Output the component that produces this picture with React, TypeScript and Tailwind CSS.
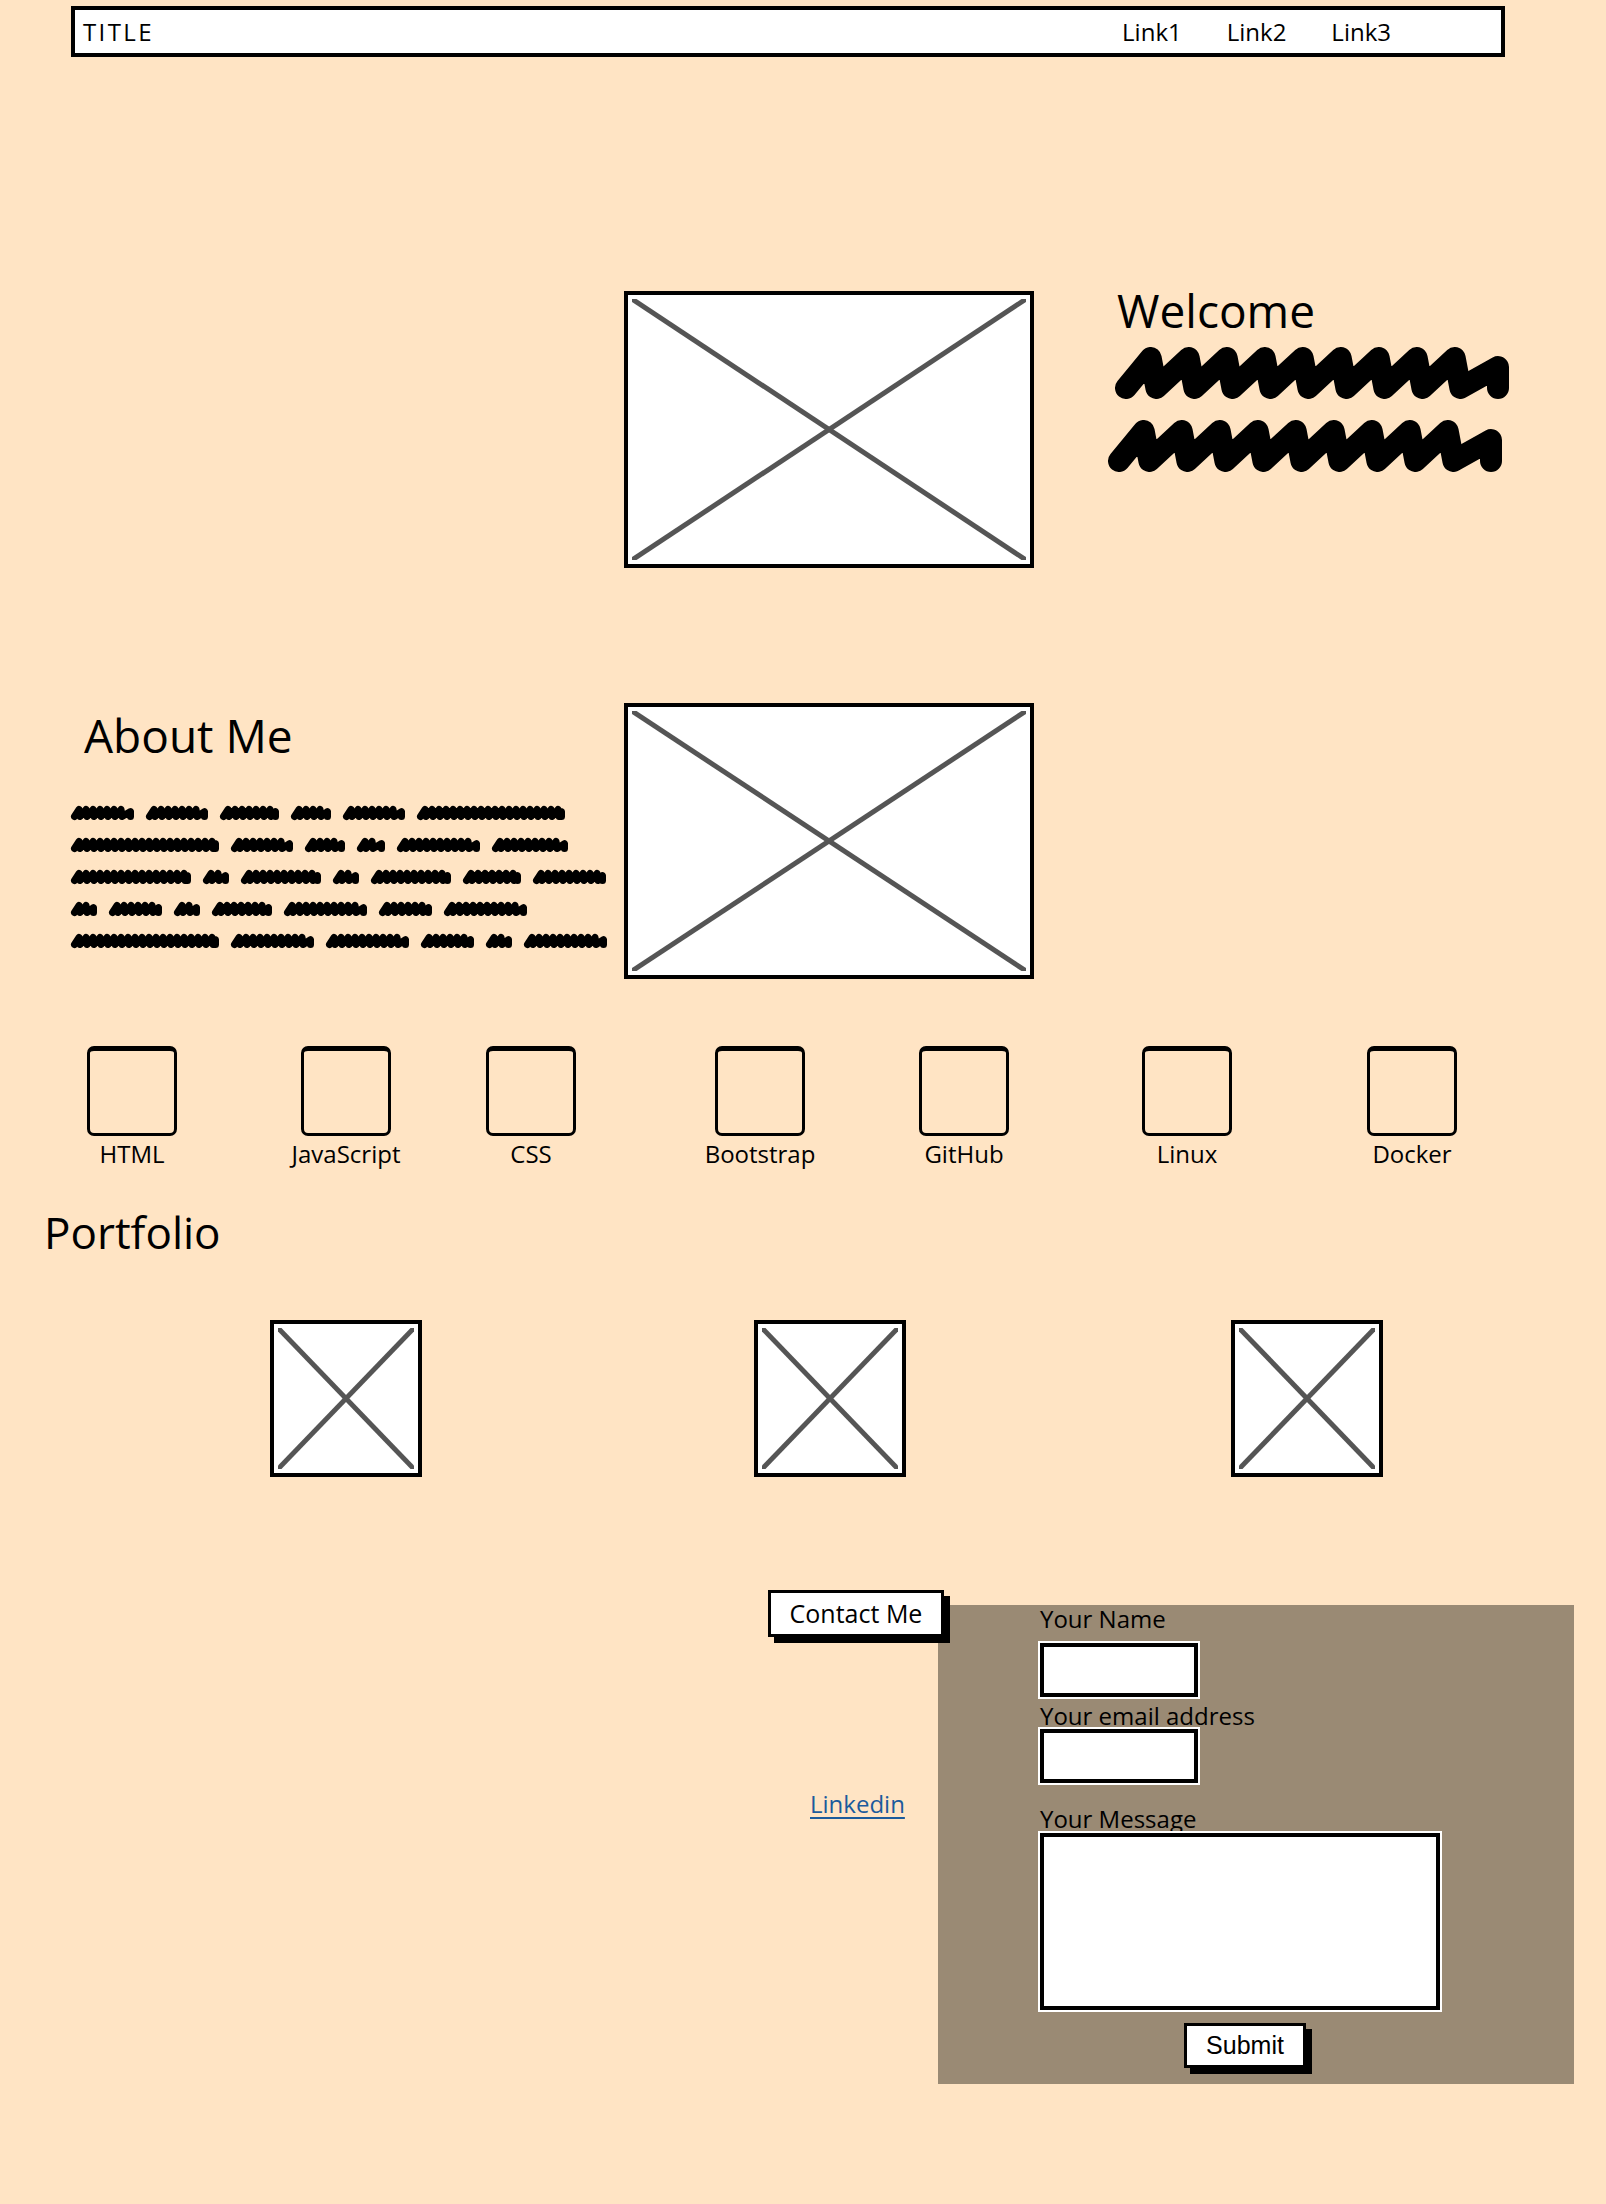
import React from "react";

const sans = "font-['Open_Sans','Noto_Sans',sans-serif]";

function scribble(w: number, h: number, step: number, pad: number) {
  // cursive-looking zigzag, drawn as one thick stroke
  let d = `M ${pad} ${h - pad}`;
  let x = pad;
  while (x + step < w - pad) {
    d += ` L ${x + step * 0.65} ${pad} L ${x + step * 0.8} ${h - pad}`;
    x += step;
  }
  d += ` L ${w - pad} ${pad + (h - 2 * pad) * 0.3} L ${w - pad} ${h - pad}`;
  return d;
}

function BigScribble({ className }: { className: string }) {
  return (
    <svg width={394} height={52} className={className}>
      <path
        d={scribble(394, 52, 38, 11)}
        fill="none"
        stroke="#000"
        strokeWidth={22}
        strokeLinecap="round"
        strokeLinejoin="round"
      />
    </svg>
  );
}

function WordLine({ words }: { words: number[] }) {
  let x = 0;
  const paths = words.map((w, i) => {
    const d = scribble(w, 16, 7, 4.5);
    const el = (
      <path
        key={i}
        d={d}
        transform={`translate(${x} 0)`}
        fill="none"
        stroke="#000"
        strokeWidth={7}
        strokeLinecap="round"
        strokeLinejoin="round"
      />
    );
    x += w + 10;
    return el;
  });
  return (
    <svg width={x} height={16} className="block">
      {paths}
    </svg>
  );
}

function XBox({ className }: { className: string }) {
  return (
    <div className={`${className} shrink-0 border-[4px] border-black bg-white p-[4px]`}>
      <svg className="block h-full w-full" viewBox="0 0 100 100" preserveAspectRatio="none">
        <line x1="0" y1="0" x2="100" y2="100" stroke="#555" strokeWidth={5} vectorEffect="non-scaling-stroke" />
        <line x1="100" y1="0" x2="0" y2="100" stroke="#555" strokeWidth={5} vectorEffect="non-scaling-stroke" />
      </svg>
    </div>
  );
}

const aboutLines = [
  [65, 64, 61, 42, 64, 150],
  [150, 64, 42, 30, 85, 78],
  [122, 28, 82, 28, 82, 60, 75],
  [28, 55, 28, 62, 85, 55, 85],
  [150, 85, 85, 55, 28, 85],
];

const skills = [
  { name: "HTML", ml: "ml-[87px]" },
  { name: "JavaScript", ml: "ml-[124px]" },
  { name: "CSS", ml: "ml-[95px]" },
  { name: "Bootstrap", ml: "ml-[139px]" },
  { name: "GitHub", ml: "ml-[114px]" },
  { name: "Linux", ml: "ml-[133px]" },
  { name: "Docker", ml: "ml-[135px]" },
];

export default function App() {
  return (
    <div className={`h-[2204px] w-[1606px] overflow-hidden bg-[#ffe4c4] font-medium text-black ${sans}`}>
      {/* header */}
      <div className="pl-[71px] pt-[6px]">
        <nav className="flex h-[51px] w-[1434px] items-center border-[4px] border-black bg-white pl-[8px] pr-[110px] text-[24px] leading-none">
          <span className="tracking-[0.1em]">TITLE</span>
          <div className="ml-auto flex gap-[45px]">
            <a>Link1</a>
            <a>Link2</a>
            <a>Link3</a>
          </div>
        </nav>
      </div>

      {/* hero */}
      <section className="mt-[234px] flex items-start pl-[624px]">
        <XBox className="h-[277px] w-[410px]" />
        <div className="ml-[83px] flex flex-col">
          <h1 className="text-[46px] leading-[38px]">Welcome</h1>
          <BigScribble className="ml-[-2px] mt-[18px]" />
          <BigScribble className="ml-[-9px] mt-[21px]" />
        </div>
      </section>

      {/* about */}
      <section className="mt-[135px] flex items-start">
        <div className="flex w-[624px] flex-col">
          <h2 className="ml-[84px] mt-[13px] text-[46px] leading-[38px]">About Me</h2>
          <div className="ml-[70px] mt-[51px] flex flex-col gap-[16px]">
            {aboutLines.map((l, i) => (
              <WordLine key={i} words={l} />
            ))}
          </div>
        </div>
        <XBox className="h-[276px] w-[410px]" />
      </section>

      {/* skills */}
      <section className="mt-[67px] flex">
        {skills.map((s) => (
          <div key={s.name} className={`${s.ml} flex w-[90px] flex-col items-center`}>
            <div className="h-[90px] w-[90px] rounded-[7px] border-[3px] border-t-[5px] border-black" />
            <span className="mt-[4px] whitespace-nowrap text-[24px] leading-[28px]">{s.name}</span>
          </div>
        ))}
      </section>

      {/* portfolio */}
      <h2 className="ml-[44px] mt-[45px] text-[44px] leading-[38px]">Portfolio</h2>
      <section className="mt-[69px] flex pl-[270px]">
        <XBox className="h-[157px] w-[152px]" />
        <XBox className="ml-[332px] h-[157px] w-[152px]" />
        <XBox className="ml-[325px] h-[157px] w-[152px]" />
      </section>

      {/* contact */}
      <section className="mt-[113px] flex pl-[768px]">
        <div className="flex w-[170px] flex-col">
          <button className="relative z-10 h-[47px] w-[176px] shrink-0 border-[3px] border-black bg-white text-[25px] leading-none shadow-[6px_6px_0_#000]">
            Contact Me
          </button>
          <a className="ml-[42px] mt-[153px] text-[24px] leading-[28px] text-[#1c5b9c] underline underline-offset-[4px]">
            Linkedin
          </a>
        </div>
        <div className="mt-[15px] flex h-[479px] w-[636px] flex-col items-start bg-[#9a8a74] pl-[102px]">
          <label className="text-[24px] leading-[28px]">Your Name</label>
          <div className="mt-[10px] h-[54px] w-[158px] border-[4px] border-black bg-white shadow-[0_0_0_2px_#fff]" />
          <label className="mt-[5px] text-[24px] leading-[28px]">Your email address</label>
          <div className="mt-[-1px] h-[54px] w-[158px] border-[4px] border-black bg-white shadow-[0_0_0_2px_#fff]" />
          <label className="mt-[22px] text-[24px] leading-[28px]">Your Message</label>
          <div className="h-[177px] w-[400px] border-[4px] border-black bg-white shadow-[0_0_0_2px_#fff]" />
          <button className="ml-[144px] mt-[13px] h-[45px] w-[122px] border-[3px] border-black bg-white font-['Liberation_Sans',sans-serif] text-[25px] leading-none shadow-[6px_6px_0_#000]">
            Submit
          </button>
        </div>
      </section>
    </div>
  );
}
